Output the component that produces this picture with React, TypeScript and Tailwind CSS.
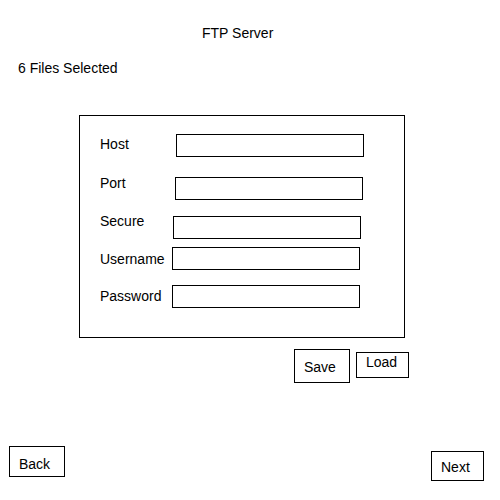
const fields = [
  { label: "Host", labelW: "w-[76px]", rowMt: "mt-[18px]", labelMt: "mt-[2px]", inputMt: "mt-0" },
  { label: "Port", labelW: "w-[75px]", rowMt: "mt-[18px]", labelMt: "mt-0", inputMt: "mt-[2px]" },
  { label: "Secure", labelW: "w-[73px]", rowMt: "mt-[13px]", labelMt: "mt-0", inputMt: "mt-[3px]" },
  { label: "Username", labelW: "w-[72px]", rowMt: "mt-[8px]", labelMt: "mt-[4px]", inputMt: "mt-0" },
  { label: "Password", labelW: "w-[72px]", rowMt: "mt-[15px]", labelMt: "mt-[3px]", inputMt: "mt-0" },
];

export default function App() {
  return (
    <div
      className="w-[500px] h-[500px] bg-white text-black text-[14px] leading-[16px] flex flex-col overflow-hidden"
      style={{ fontFamily: '"Liberation Sans", Arial, sans-serif' }}
    >
      <p className="mt-[25px] ml-[202px]">FTP Server</p>
      <p className="mt-[19px] ml-[18px]">6 Files Selected</p>

      <div className="mt-[39px] ml-[79px] w-[326px] h-[223px] border border-black pl-[20px] flex flex-col">
        {fields.map((f) => (
          <div key={f.label} className={`flex items-start ${f.rowMt}`}>
            <span className={`${f.labelW} ${f.labelMt} shrink-0`}>{f.label}</span>
            <input
              type={f.label === "Password" ? "password" : "text"}
              className={`${f.inputMt} w-[188px] h-[23px] border border-black outline-none bg-white`}
            />
          </div>
        ))}
      </div>

      <div className="flex items-start ml-[294px]">
        <button className="mt-[11px] w-[56px] h-[34px] border border-black pl-[9px] pt-[9px] text-left flex items-start">
          Save
        </button>
        <button className="mt-[14px] ml-[6px] w-[53px] h-[26px] border border-black pl-[9px] pt-[1px] text-left flex items-start">
          Load
        </button>
      </div>

      <div className="flex items-start mt-[63px]">
        <button className="ml-[9px] w-[56px] h-[31px] border border-black pl-[9px] pt-[9px] text-left flex items-start">
          Back
        </button>
        <button className="ml-auto mr-[16px] mt-[5px] w-[53px] h-[30px] border border-black pl-[9px] pt-[7px] text-left flex items-start">
          Next
        </button>
      </div>
    </div>
  );
}
